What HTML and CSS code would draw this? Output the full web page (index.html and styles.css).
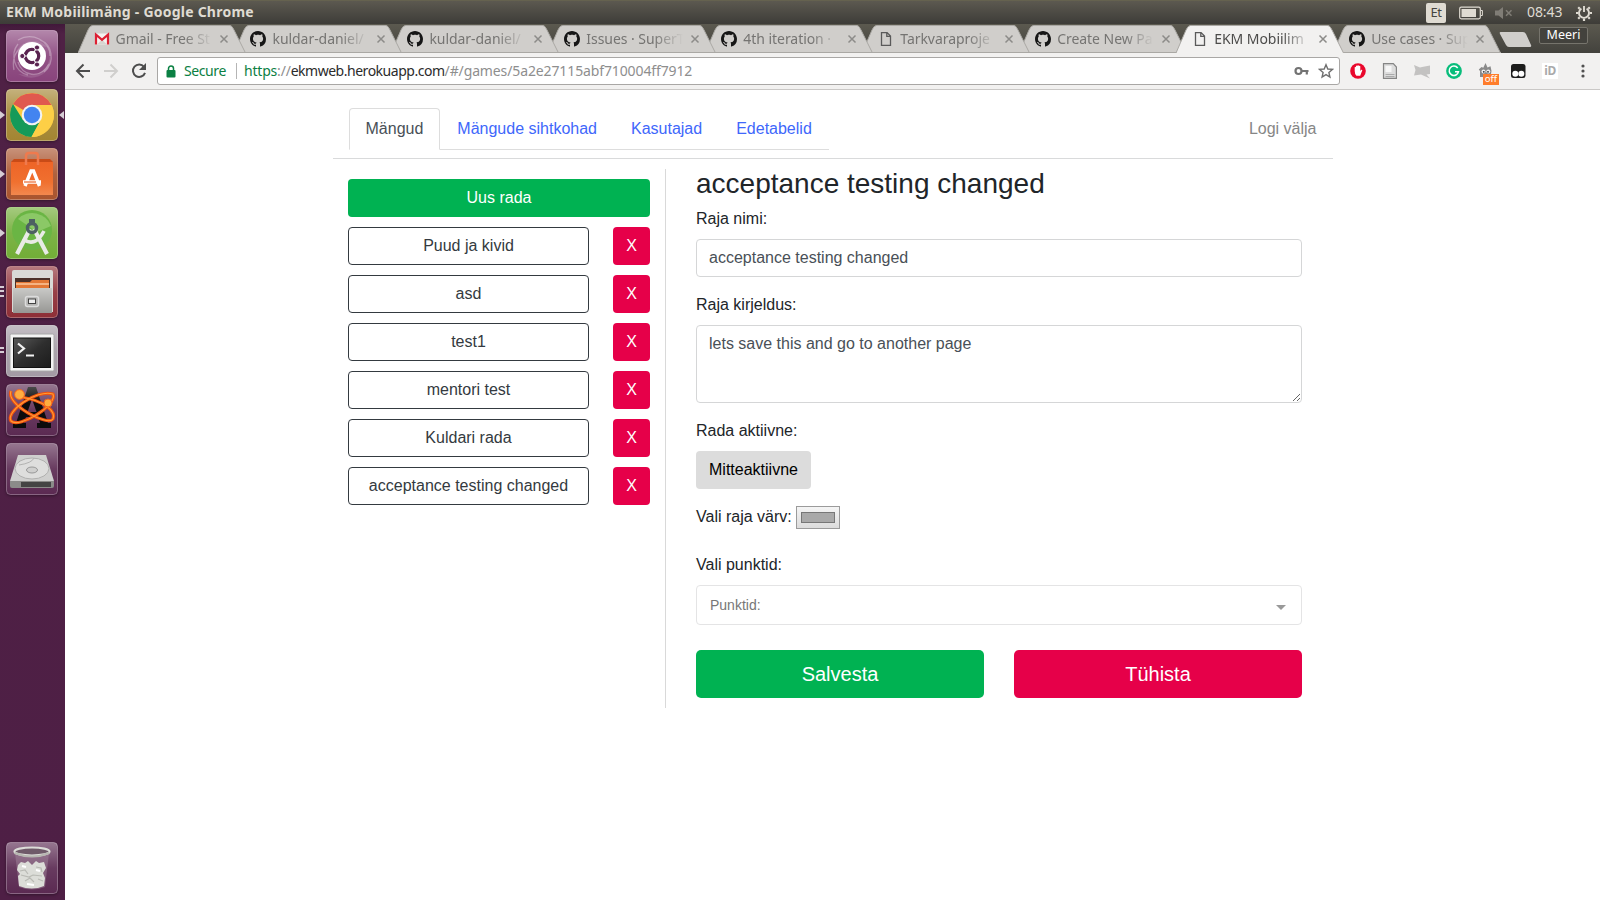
FILE: index.html
```html
<!DOCTYPE html>
<html lang="et">
<head>
<meta charset="utf-8">
<title>EKM Mobiilimäng</title>
<link rel="stylesheet" href="styles.css">
</head>
<body>
<svg class="defs" width="0" height="0">
  <defs>
    <linearGradient id="shine" x1="0" y1="0" x2="0" y2="1"><stop offset="0" stop-color="#fff" stop-opacity=".36"/><stop offset=".5" stop-color="#fff" stop-opacity=".08"/><stop offset="1" stop-color="#fff" stop-opacity="0"/></linearGradient>
    <linearGradient id="steel" x1="0" y1="0" x2="0" y2="1"><stop offset="0" stop-color="#c9c9c7"/><stop offset="1" stop-color="#979794"/></linearGradient>
    <linearGradient id="bag" x1="0" y1="0" x2="0" y2="1"><stop offset="0" stop-color="#ee6427"/><stop offset=".6" stop-color="#f0702f"/><stop offset="1" stop-color="#f2884e"/></linearGradient>
    <linearGradient id="screen" x1="0" y1="0" x2="1" y2="1"><stop offset="0" stop-color="#5a5a5a"/><stop offset=".5" stop-color="#2e2e2e"/><stop offset="1" stop-color="#1c1c1c"/></linearGradient>
    <linearGradient id="atom-a" x1="0" y1="0" x2="0" y2="1"><stop offset="0" stop-color="#4a4a4a"/><stop offset=".4" stop-color="#0c0c0c"/></linearGradient>
    <symbol id="github" viewBox="0 0 16 16"><path fill="#161616" d="M8 0C3.58 0 0 3.58 0 8c0 3.54 2.29 6.53 5.47 7.59.4.07.55-.17.55-.38 0-.19-.01-.82-.01-1.49-2.01.37-2.53-.49-2.69-.94-.09-.23-.48-.94-.82-1.13-.28-.15-.68-.52-.01-.53.63-.01 1.08.58 1.23.82.72 1.21 1.87.87 2.33.66.07-.52.28-.87.51-1.07-1.78-.2-3.64-.89-3.64-3.95 0-.87.31-1.59.82-2.15-.08-.2-.36-1.02.08-2.12 0 0 .67-.21 2.2.82.64-.18 1.32-.27 2-.27s1.36.09 2 .27c1.53-1.04 2.2-.82 2.2-.82.44 1.1.16 1.92.08 2.12.51.56.82 1.27.82 2.15 0 3.07-1.87 3.75-3.65 3.95.29.25.54.73.54 1.48 0 1.07-.01 1.93-.01 2.2 0 .21.15.46.55.38A8.01 8.01 0 0 0 16 8c0-4.42-3.58-8-8-8z"/></symbol>
    <symbol id="page" viewBox="0 0 16 16"><path fill="none" stroke="#5a5a5a" stroke-width="1.3" d="M3.500 1.600h5.600l3.400 3.500v9.300h-9zM8.800 1.800v3.600h3.600"/></symbol>
    <symbol id="gmail" viewBox="0 0 16 16"><path fill="#f4f2f0" d="M1 2.500h14v11H1z"/><path fill="#d8d4d0" d="M3 13.500l5-5 5 5z"/><path fill="none" stroke="#dd2033" stroke-width="2.200" d="M2 13.500V3.600l6 5.200 6-5.200v9.900"/></symbol>
    <symbol id="close" viewBox="0 0 10 10"><path stroke="#8c8b89" stroke-width="1.500" d="M1.500 1.500l7 7M8.500 1.500l-7 7"/></symbol>
    <symbol id="shape" viewBox="0 0 168 28"><path d="M0 28 L10 5 Q12 .500 14.500 .500 H152 Q154 .500 156 5 L167.500 28z" fill="currentColor"/><path d="M0 28 L10 5 Q12 .500 14.500 .500 H152 Q154 .500 156 5 L167.500 28" fill="none" stroke="#aaa8a4" stroke-width="1"/></symbol>
    <symbol id="shine-box" viewBox="0 0 52 52"><rect x=".5" y=".5" width="51" height="51" rx="4" fill="url(#shine)" stroke="#fff" stroke-opacity=".28"/></symbol>
  </defs>
</svg>

<header class="panel">
  <span class="panel-title">EKM Mobiilimäng - Google Chrome</span>
  <div class="indicators">
    <span class="lang">Et</span>
    <svg class="battery" width="24" height="14" viewBox="0 0 24 14"><rect x=".7" y="1.200" width="20.600" height="11.600" rx="1.500" fill="none" stroke="#dfdbd2" stroke-width="1.200"/><rect x="2.500" y="3" width="14.500" height="8" fill="#dfdbd2"/><path d="M22 4.500h1.400v5H22" fill="none" stroke="#dfdbd2"/></svg>
    <svg class="sound" width="18" height="14" viewBox="0 0 18 14"><path d="M0 4.500h3.500L8 1v12L3.500 9.500H0z" fill="#807d76"/><path d="M11 4.200l5.500 5.600M16.500 4.200L11 9.800" stroke="#807d76" stroke-width="1.500"/></svg>
    <span class="clock">08:43</span>
    <svg class="gear" width="16" height="16" viewBox="0 0 16 16" fill="none" stroke="#dfdbd2"><path d="M5.400 3.600a5 5 0 1 0 5.200 0M8 1v6" stroke-width="1.900"/><path d="M3.700 3.700L2.200 2.200M12.300 3.700l1.500-1.500M2.500 8H0M13.500 8H16M3.700 12.300l-1.500 1.500M12.300 12.300l1.500 1.500M8 13.500V16" stroke-width="2.200"/></svg>
  </div>
</header>

<div class="desktop">
  <aside class="launcher">
    <div class="app dash"><svg viewBox="0 0 52 52"><use href="#shine-box"/><g fill="none" stroke="#fff" stroke-opacity=".3" stroke-width="1.300"><path d="M8 40C4 20 22 8 36 16M22 45C8 42 4 24 12 14M43 34C34 50 16 46 12 32M34 10C46 14 50 32 38 42M12 10C26 2 44 10 44 26"/></g><path fill="#fff" fill-opacity=".12" d="M8 32C8 12 28 4 44 18L36 16C18 8 8 20 8 32zM44 24c4 18-14 30-32 20l8 1c14 2 24-8 24-21z"/><circle cx="26" cy="26" r="14" fill="#fff"/><circle cx="26" cy="26" r="6.700" fill="none" stroke="#5a2350" stroke-width="3.300"/><path d="M26 26L15 26M26 26l6-11M26 26l6 11" stroke="#fff" stroke-width="1.200"/><g fill="#5a2350" stroke="#fff" stroke-width="1"><circle cx="16.300" cy="26" r="2.600"/><circle cx="31" cy="17.500" r="2.600"/><circle cx="31" cy="34.500" r="2.600"/></g><circle cx="26" cy="26" r="4.700" fill="#fff"/></svg></div>
    <div class="app chrome on focus"><svg viewBox="0 0 52 52"><use href="#shine-box"/><circle cx="26" cy="26" r="22" fill="#fdcb3f"/><path d="M26 26L7 15A22 22 0 0 1 45.500 16z" fill="#e0594e"/><path d="M26 26L45.500 16H26z" fill="#e0594e"/><path d="M7 15A22 22 0 0 0 25.500 48L35 31 26 26 17 31z" fill="#159a59"/><path d="M33 34L25.500 48A22 22 0 0 0 45.500 16H26l10 8z" fill="#fdcf46"/><circle cx="26" cy="26" r="10.300" fill="#f3f3f3"/><circle cx="26" cy="26" r="8.200" fill="#4384f0"/></svg></div>
    <div class="app software on"><svg viewBox="0 0 52 52"><use href="#shine-box"/><path d="M5 14h42v33H5z" fill="url(#bag)"/><path d="M5 14l3-3h36l3 3z" fill="#c94b17"/><path d="M20 17v-9q0-3 3-3h6q3 0 3 3v9" fill="none" stroke="#ef7a4e" stroke-width="2.500"/><path d="M19 38l6-15h2.500l6 15M17 34h18" fill="none" stroke="#fff" stroke-width="3.400"/><path d="M18 34h12" stroke="#e9682f" stroke-width="1.200"/></svg></div>
    <div class="app studio on"><svg viewBox="0 0 52 52"><use href="#shine-box"/><circle cx="26" cy="23" r="20" fill="#6ab544"/><path d="M12 12a20 20 0 0 1 33 7L31 25z" fill="#8bc866"/><path d="M24 22L11 47M28 22l13 25" stroke="#e8ebe6" stroke-width="4.200"/><path d="M17 32q12 9 21-8" fill="none" stroke="#e8ebe6" stroke-width="3.600"/><path d="M23 12h6v6h-6z" fill="#4d6162"/><circle cx="26" cy="21" r="4.500" fill="none" stroke="#4d6162" stroke-width="3.500"/></svg></div>
    <div class="app files multi"><svg viewBox="0 0 52 52"><use href="#shine-box"/><path d="M6 6q0-2 2-2h37q2 0 2 2v40H6z" fill="#d9d9d6"/><path d="M9 12h35v13H9z" fill="#4b3029"/><path d="M10 16h14l2-2h17v11H10z" fill="#e37735"/><path d="M10 18h33" stroke="#fbc79e" stroke-width="1.500"/><path d="M7 22h39v25H7z" fill="url(#steel)"/><rect x="19.500" y="30.500" width="13" height="10" rx="2" fill="#b5b5b3" stroke="#dcdcdc" stroke-width="1.500"/><rect x="22.500" y="33" width="7" height="4.500" fill="#eee" stroke="#444"/></svg></div>
    <div class="app terminal multi two"><svg viewBox="0 0 52 52"><use href="#shine-box"/><rect x="4" y="9" width="44" height="37" rx="1.500" fill="#f3f3f3" stroke="#a8a8a8"/><rect x="7.500" y="13" width="37" height="29.500" fill="url(#screen)" stroke="#111"/><path d="M12 18.500l6 5-6 5M20 30.500h8" fill="none" stroke="#f2f2f2" stroke-width="2.200"/></svg></div>
    <div class="app atom"><svg viewBox="0 0 52 52"><use href="#shine-box"/><path fill-rule="evenodd" d="M22 3h8l12 36h3v5H31v-5h3l-2-6H20l-2 6h2v5H7v-5h3zM26 15l-4.500 13h9z" fill="url(#atom-a)"/><g fill="none" stroke="#f0520f" stroke-width="3.200"><path d="M5 7C-1 20 42 43 47 35 50 28 40 17 15 13"/><path d="M47 10C52 21 13 45 5 37-1 28 30 5 47 10z"/></g><g fill="none" stroke="#ff9c35" stroke-width="1.100"><path d="M5 7C-1 20 42 43 47 35 50 28 40 17 15 13"/><path d="M47 10C52 21 13 45 5 37-1 28 30 5 47 10z"/></g><circle cx="13.500" cy="10.500" r="4.900" fill="#ffad3f" stroke="#f4631c" stroke-width="1"/><circle cx="42" cy="19" r="4" fill="#ffad3f" stroke="#f4631c" stroke-width="1"/></svg></div>
    <div class="app disk"><svg viewBox="0 0 52 52"><use href="#shine-box"/><path d="M12 12h28l8 26H4z" fill="#cfcfce"/><path d="M4 38h44v5q0 2-2 2H6q-2 0-2-2z" fill="#8b8b89"/><path d="M15 39h30v5H15z" fill="#444"/><ellipse cx="26" cy="25.500" rx="17" ry="10.500" fill="#dededd" stroke="#b0b0af"/><ellipse cx="26" cy="27" rx="5.500" ry="3" fill="#cfcfce" stroke="#999"/><path d="M13 22q13-2 15-7" fill="none" stroke="#b3b3b2"/></svg></div>
    <div class="app trash"><svg viewBox="0 0 52 52"><use href="#shine-box"/><path d="M9 11l4 34q13 5 26 0l4-34z" fill="#a68b9f" fill-opacity=".45"/><path d="M13 44l-1-10 2-2-3-4 1-5 3-3 4 1 3-2 4 4 4-4 3 2 5-1 2 6-3 5 2 5-1 8q-12 5-25 0z" fill="#dcddd8"/><path d="M14 29l5-1 3 4M30 25l5 1 1 4M19 39l5-3 4 4M32 37l5 2M15 33l8 2 4-2 9 1" fill="none" stroke="#b9bab4" stroke-width="1.200"/><path d="M16 24l4 1M30 28l4 1M21 42l7 1" stroke="#fff" stroke-width="2"/><ellipse cx="26" cy="9.500" rx="17.500" ry="4" fill="#6f5a69" stroke="#dcdcd8" stroke-width="2.200"/><path d="M8.500 11q17.500 7 35 0" fill="none" stroke="#b7b7b1" stroke-width="2.200"/></svg></div>
  </aside>

  <div class="browser">
    <div class="tabstrip">
      <div class="tab t1"><svg class="tab-bg"><use href="#shape"/></svg><svg class="fav"><use href="#gmail"/></svg><span class="tab-title">Gmail - Free St</span><svg class="x"><use href="#close"/></svg></div>
      <div class="tab t2"><svg class="tab-bg"><use href="#shape"/></svg><svg class="fav"><use href="#github"/></svg><span class="tab-title">kuldar-daniel/</span><svg class="x"><use href="#close"/></svg></div>
      <div class="tab t3"><svg class="tab-bg"><use href="#shape"/></svg><svg class="fav"><use href="#github"/></svg><span class="tab-title">kuldar-daniel/</span><svg class="x"><use href="#close"/></svg></div>
      <div class="tab t4"><svg class="tab-bg"><use href="#shape"/></svg><svg class="fav"><use href="#github"/></svg><span class="tab-title">Issues · SuperT</span><svg class="x"><use href="#close"/></svg></div>
      <div class="tab t5"><svg class="tab-bg"><use href="#shape"/></svg><svg class="fav"><use href="#github"/></svg><span class="tab-title">4th iteration ·</span><svg class="x"><use href="#close"/></svg></div>
      <div class="tab t6"><svg class="tab-bg"><use href="#shape"/></svg><svg class="fav"><use href="#page"/></svg><span class="tab-title">Tarkvaraproje</span><svg class="x"><use href="#close"/></svg></div>
      <div class="tab t7"><svg class="tab-bg"><use href="#shape"/></svg><svg class="fav"><use href="#github"/></svg><span class="tab-title">Create New Pa</span><svg class="x"><use href="#close"/></svg></div>
      <div class="tab active"><svg class="tab-bg"><use href="#shape"/></svg><svg class="fav"><use href="#page"/></svg><span class="tab-title">EKM Mobiilim</span><svg class="x"><use href="#close"/></svg></div>
      <div class="tab t9"><svg class="tab-bg"><use href="#shape"/></svg><svg class="fav"><use href="#github"/></svg><span class="tab-title">Use cases · Sup</span><svg class="x"><use href="#close"/></svg></div>
      <svg class="newtab" width="34" height="17" viewBox="0 0 34 17"><path d="M1.500 1H24q2 0 3 2l5 11q.8 2-1 2H10q-2 0-3-2L1 3q-.8-2 .5-2z" fill="#d0cecb"/></svg>
      <span class="profile">Meeri</span>
    </div>

    <div class="toolbar">
      <svg class="back" width="16" height="16" viewBox="0 0 16 16" fill="none" stroke="#4d4d4d" stroke-width="2"><path d="M15 8H2.500M8.500 1.500L2 8l6.500 6.500"/></svg>
      <svg class="fwd" width="16" height="16" viewBox="0 0 16 16" fill="none" stroke="#d0cfcd" stroke-width="2"><path d="M1 8h12.500M7.500 1.500L14 8l-6.500 6.500"/></svg>
      <svg class="reload" width="16" height="16" viewBox="0 0 16 16"><path d="M13 3.800A6.200 6.200 0 1 0 14 9.800" fill="none" stroke="#4d4d4d" stroke-width="2"/><path d="M15 0v7H8z" fill="#4d4d4d"/></svg>
      <div class="omnibox">
        <svg class="lock" width="10" height="13" viewBox="0 0 10 13"><rect x=".5" y="5" width="9" height="7.500" rx="1" fill="#0b8043"/><path d="M2.500 5.500V3.500a2.500 2.500 0 0 1 5 0v2" fill="none" stroke="#0b8043" stroke-width="1.500"/></svg>
        <span class="secure">Secure</span>
        <span class="sep"></span>
        <span class="url"><span class="scheme">https</span><span class="slashes">://</span><span class="host">ekmweb.herokuapp.com</span>/#/games/5a2e27115abf710004ff7912</span>
        <svg class="key" width="16" height="10" viewBox="0 0 16 10"><circle cx="4.500" cy="5" r="3" fill="none" stroke="#737373" stroke-width="2.200"/><path d="M8 5h6.500M12.800 5v3.600" stroke="#737373" stroke-width="2.200"/></svg>
        <svg class="star" width="16" height="16" viewBox="0 0 16 16"><path d="M8 1.700l1.800 4.300 4.600.4-3.500 3.100 1 4.500L8 11.600 4.100 14l1-4.500L1.600 6.400l4.600-.4z" fill="none" stroke="#6f6f6f" stroke-width="1.400"/></svg>
      </div>
      <div class="extensions">
        <svg viewBox="0 0 16 16"><circle cx="8" cy="8" r="7.800" fill="#e9082c"/><path d="M4.700 8V4.200q.7-.8 1.300 0V3q.8-.8 1.400 0v-.4q.8-.8 1.400 0V3q.8-.8 1.500.2V8l1-1.200q1-.3 1 .5L10.200 12.800H6.400Q4.700 11 4.700 8z" fill="#fff"/></svg>
        <svg viewBox="0 0 16 16"><path d="M1.500.6h9.800L14.400 4v11.400H1.500z" fill="#ddd" stroke="#858585" stroke-width="1.200"/><path d="M3.500 3h6v6h-6z" fill="#f6f6f6"/><path d="M3.500 11.500h9M3.500 13.500h9" stroke="#aaa"/></svg>
        <svg viewBox="0 0 16 16"><path d="M0 2l6 2.500 2-.5 8-1.500v8.500l-3.500.5 3.500 4L7 11.500 0 12.500 1.500 7z" fill="#c3c2c1"/></svg>
        <svg viewBox="0 0 16 16"><circle cx="8" cy="8" r="7.900" fill="#08bd7b"/><path d="M11.700 5A4.700 4.700 0 1 0 12.500 8.700H9" fill="none" stroke="#fff" stroke-width="1.500"/></svg>
        <span class="off-ext"><svg viewBox="0 0 16 16"><path d="M2 14V8L.8 6.500 3.500 4l1.800.8L7.500 0l2 4.500 3-1.200L13.500 8l-1 6z" fill="#8a8a8a"/><circle cx="5.500" cy="8.500" r="2" fill="#eee"/><circle cx="10.300" cy="8.500" r="2" fill="#eee"/><circle cx="5.800" cy="8.800" r=".9" fill="#333"/><circle cx="10" cy="8.800" r=".9" fill="#333"/></svg><b class="off">off</b></span>
        <svg viewBox="0 0 16 16"><rect x="1" y="1" width="14.500" height="14" rx="2.500" fill="#1d1d1d"/><circle cx="5.300" cy="10.800" r="3" fill="#fff"/><circle cx="11.300" cy="10.800" r="3" fill="#fff"/></svg>
        <span class="id">iD</span>
      </div>
      <svg class="menu" width="4" height="14" viewBox="0 0 4 14" fill="#505050"><circle cx="2" cy="2" r="1.600"/><circle cx="2" cy="7" r="1.600"/><circle cx="2" cy="12" r="1.600"/></svg>
    </div>

    <main class="page">
      <div class="container">
        <nav class="topnav">
          <ul class="nav-tabs">
            <li><a class="nav-link current">Mängud</a></li>
            <li><a class="nav-link">Mängude sihtkohad</a></li>
            <li><a class="nav-link">Kasutajad</a></li>
            <li><a class="nav-link">Edetabelid</a></li>
          </ul>
          <a class="logout">Logi välja</a>
        </nav>
        <div class="columns">
          <section class="tracks">
            <button class="btn green">Uus rada</button>
            <div class="track"><button class="btn outline">Puud ja kivid</button><button class="btn red">X</button></div>
            <div class="track"><button class="btn outline">asd</button><button class="btn red">X</button></div>
            <div class="track"><button class="btn outline">test1</button><button class="btn red">X</button></div>
            <div class="track"><button class="btn outline">mentori test</button><button class="btn red">X</button></div>
            <div class="track"><button class="btn outline">Kuldari rada</button><button class="btn red">X</button></div>
            <div class="track"><button class="btn outline">acceptance testing changed</button><button class="btn red">X</button></div>
          </section>
          <section class="editor">
            <h3>acceptance testing changed</h3>
            <label>Raja nimi:</label>
            <input class="control" type="text" value="acceptance testing changed">
            <label>Raja kirjeldus:</label>
            <textarea class="control area">lets save this and go to another page</textarea>
            <label>Rada aktiivne:</label>
            <button class="btn grey">Mitteaktiivne</button>
            <div class="color-row">Vali raja värv: <span class="swatch"><span class="swatch-fill"></span></span></div>
            <label>Vali punktid:</label>
            <div class="select"><span>Punktid:</span><i class="caret"></i></div>
            <div class="actions"><button class="btn green big">Salvesta</button><button class="btn red big">Tühista</button></div>
          </section>
        </div>
      </div>
    </main>
  </div>
</div>
</body>
</html>
```

FILE: styles.css
```css
* { box-sizing: border-box; }
body { margin: 0; width: 1600px; height: 900px; overflow: hidden; display: flex; flex-direction: column; font: 16px/1.5 "Liberation Sans", Arial, sans-serif; color: #212529; background: #fff; }
.defs { position: absolute; }
svg { display: block; flex: none; }

/* Desktop panel */
.panel { height: 24px; flex: none; display: flex; justify-content: space-between; align-items: center; background: linear-gradient(#5c5950, #3d3c38); border-top: 1px solid #65624f; font-family: "Noto Sans", sans-serif; color: #dfdbd2; }
.panel-title { margin: -2px 0 0 6px; font-size: 14px; line-height: 22px; font-weight: 700; letter-spacing: .23px; white-space: nowrap; }
.indicators { display: flex; align-items: center; height: 23px; margin-right: 8px; }
.lang { width: 20px; height: 20px; border-radius: 2px; background: #dfdbd2; color: #45443f; font-size: 13px; line-height: 19px; text-align: center; letter-spacing: -.5px; }
.battery { margin-left: 13px; }
.sound { margin-left: 12px; }
.clock { margin: -2px 0 0 14px; width: 37px; font-size: 14px; line-height: 22px; white-space: nowrap; letter-spacing: -.1px; }
.gear { margin-left: 12px; }

.desktop { flex: 1; min-height: 0; display: flex; }

/* Launcher */
.launcher { width: 65px; flex: none; display: flex; flex-direction: column; gap: 7px; padding: 6px 0 6px 6px; background: linear-gradient(#41183a, #4f2145 10px, #4e1f45); }
.app { position: relative; width: 52px; height: 52px; flex: none; border-radius: 5px; box-shadow: 0 1px 3px rgba(0,0,0,.35); }
.app svg { width: 52px; height: 52px; }
.dash { background: #89447c; }
.chrome { background: #a38532; }
.software { background: #a9542e; }
.studio { background: #72ad37; }
.files { background: #8e2f37; }
.terminal { background: #a39aa4; }
.atom, .disk, .trash { background: #5b2a52; }
.trash { margin-top: auto; }
.on::before, .focus::after { content: ""; position: absolute; top: 22px; border: 4px solid transparent; }
.on::before { left: -6px; border-left: 5px solid #d6cdd5; border-right: 0; }
.focus::after { right: -6px; border-right: 5px solid #d6cdd5; border-left: 0; }
.multi::before { content: ""; position: absolute; left: -6px; top: 20px; width: 4px; height: 11px; background: repeating-linear-gradient(#d6cdd5 0 2px, transparent 2px 4.300px); }
.two::before { top: 22px; height: 7px; }

/* Browser chrome */
.browser { flex: 1; min-width: 0; display: flex; flex-direction: column; }
.tabstrip { height: 29px; flex: none; display: flex; padding: 1px 0 0 12.500px; background: linear-gradient(#5b594f, #43423d); font-family: "Noto Sans", sans-serif; }
.tab { position: relative; width: 168px; height: 28px; flex: none; margin-right: -11.050px; display: flex; align-items: center; padding-left: 16px; color: #d0cecb; }
.tab-bg { position: absolute; left: 0; top: 0; width: 168px; height: 28px; }
.tab::after { content: ""; position: absolute; left: 0; right: 0; bottom: 0; height: 1px; background: #aaa8a4; }
.tab.active::after { display: none; }
.t1 { z-index: 8; } .t2 { z-index: 7; } .t3 { z-index: 6; } .t4 { z-index: 5; } .t5 { z-index: 4; } .t6 { z-index: 3; } .t7 { z-index: 2; } .t9 { z-index: 1; }
.tab.active { z-index: 9; color: #f2f1f0; }
.fav { position: relative; width: 16px; height: 16px; }
.tab-title { position: relative; margin-left: 6px; width: 97px; white-space: nowrap; font-size: 14px; line-height: 22px; letter-spacing: -.05px; color: #757472; -webkit-mask-image: linear-gradient(90deg, #000 70%, transparent); mask-image: linear-gradient(90deg, #000 70%, transparent); }
.active .tab-title { color: #4c4b4a; }
.x { position: relative; margin-left: 6.500px; width: 10px; height: 10px; }
.newtab { margin: 6px 0 0 9px; }
.profile { margin: 2px 12px 0 auto; width: 49px; height: 17px; border: 1px solid #76746c; border-radius: 2px; background: #43423d; color: #fff; font-size: 12.500px; line-height: 14px; text-align: center; }
.toolbar { height: 37px; flex: none; display: flex; align-items: center; background: #f2f1f0; border-bottom: 1px solid #cac8c6; padding-left: 10px; font-family: "Noto Sans", sans-serif; }
.fwd, .reload { margin-left: 12px; }
.omnibox { width: 1183px; height: 28px; margin-left: 10px; display: flex; align-items: center; background: #fff; border: 1px solid #a9a7a5; border-radius: 3px; padding-left: 8px; font-size: 14px; line-height: 24px; white-space: nowrap; }
.secure { margin-left: 8px; width: 43px; color: #0b8043; letter-spacing: -.4px; }
.sep { width: 1px; height: 16px; margin: 0 7px 0 9px; background: #b5b5b5; }
.url { color: #8e8e8e; letter-spacing: -.120px; }
.scheme, .slashes { letter-spacing: -.2px; }
.scheme { color: #0b8043; }
.host { color: #2b2b2b; letter-spacing: -.480px; }
.key { margin-left: auto; }
.star { margin: 0 5px 0 8px; }
.extensions { display: flex; gap: 16px; margin-left: 10px; }
.extensions svg { width: 16px; height: 16px; }
.off-ext { position: relative; }
.off { position: absolute; left: 5px; top: 11px; width: 16px; height: 11px; background: #ff7d2b; color: #fff; font-weight: 400; font-size: 9.500px; line-height: 10px; text-align: center; }
.id { width: 16px; height: 16px; background: #fff; color: #aaa; font-weight: 700; font-size: 12px; line-height: 15px; text-align: center; letter-spacing: -.5px; }
.menu { margin-left: 23px; }

/* Page */
.page { flex: 1; min-height: 0; background: #fff; }
.container { width: 1000px; margin-left: 268px; padding-top: 18px; }
.topnav { height: 51px; display: flex; justify-content: space-between; border-bottom: 1px solid #d9dadb; padding: 0 16.500px 0 15.500px; }
.nav-tabs { display: flex; height: 42px; margin: 0; padding: 0; list-style: none; border-bottom: 1px solid #ddd; }
.nav-link { display: block; height: 42px; padding: 8px 16px; border: 1px solid transparent; border-radius: 4px 4px 0 0; line-height: 24px; color: #4067fb; }
.nav-link.current { color: #495057; background: #fff; border-color: #ddd #ddd #fff; }
.logout { padding-top: 9px; color: #868686; }
.columns { display: flex; margin-top: 10px; height: 539px; }
.tracks { width: 333px; padding: 10px 15px; border-right: 1px solid #d9d9d9; display: flex; flex-direction: column; gap: 10px; }
.track { display: flex; justify-content: space-between; }
.btn { display: block; height: 38px; padding: 0 12px; border: 1px solid transparent; border-radius: 4px; font: 16px/24px "Liberation Sans", Arial, sans-serif; color: #fff; text-align: center; }
.green { background: #00b252; }
.tracks .green { width: 302px; }
.red { background: #e60049; }
.track .red { width: 37px; }
.outline { width: 241px; background: #fff; border-color: #343a40; color: #343a40; }
.grey { background: #dcdcdc; color: #000; margin-bottom: 16px; }
.editor { flex: 1; padding: 0 31px 0 30px; margin-top: -1px; }
h3 { margin: 0 0 8px; font-size: 28px; line-height: 31px; font-weight: 400; }
label { display: block; height: 24px; margin-bottom: 8px; }
.control { display: block; width: 606px; height: 38px; margin: 0 0 16px; padding: 6px 12px; border: 1px solid #d5d6d7; border-radius: 4px; font: 16px/24px "Liberation Sans", Arial, sans-serif; color: #495057; background: #fff; outline: 0; }
.area { height: 78px; resize: vertical; }
.color-row { display: flex; align-items: flex-start; height: 48px; }
.swatch { width: 44px; height: 23px; margin: 1px 0 0 4px; padding: 5px 4px; border: 1px solid #9b9b9b; background: linear-gradient(#f5f5f5, #dcdcdc); }
.swatch-fill { display: block; width: 34px; height: 11px; background: #a9a9a9; border: 1px solid #777; }
.select { width: 606px; height: 40px; display: flex; align-items: center; justify-content: space-between; padding: 0 15px 0 13px; border: 1px solid #e4e4e5; border-radius: 4px; font-size: 14px; color: #777; }
.caret { border: 5px solid transparent; border-top-color: #999; border-bottom: 0; margin-top: 4px; }
.actions { display: flex; justify-content: space-between; width: 606px; margin-top: 25px; }
.big { width: 288px; height: 48px; font-size: 20px; border-radius: 5px; }
```
